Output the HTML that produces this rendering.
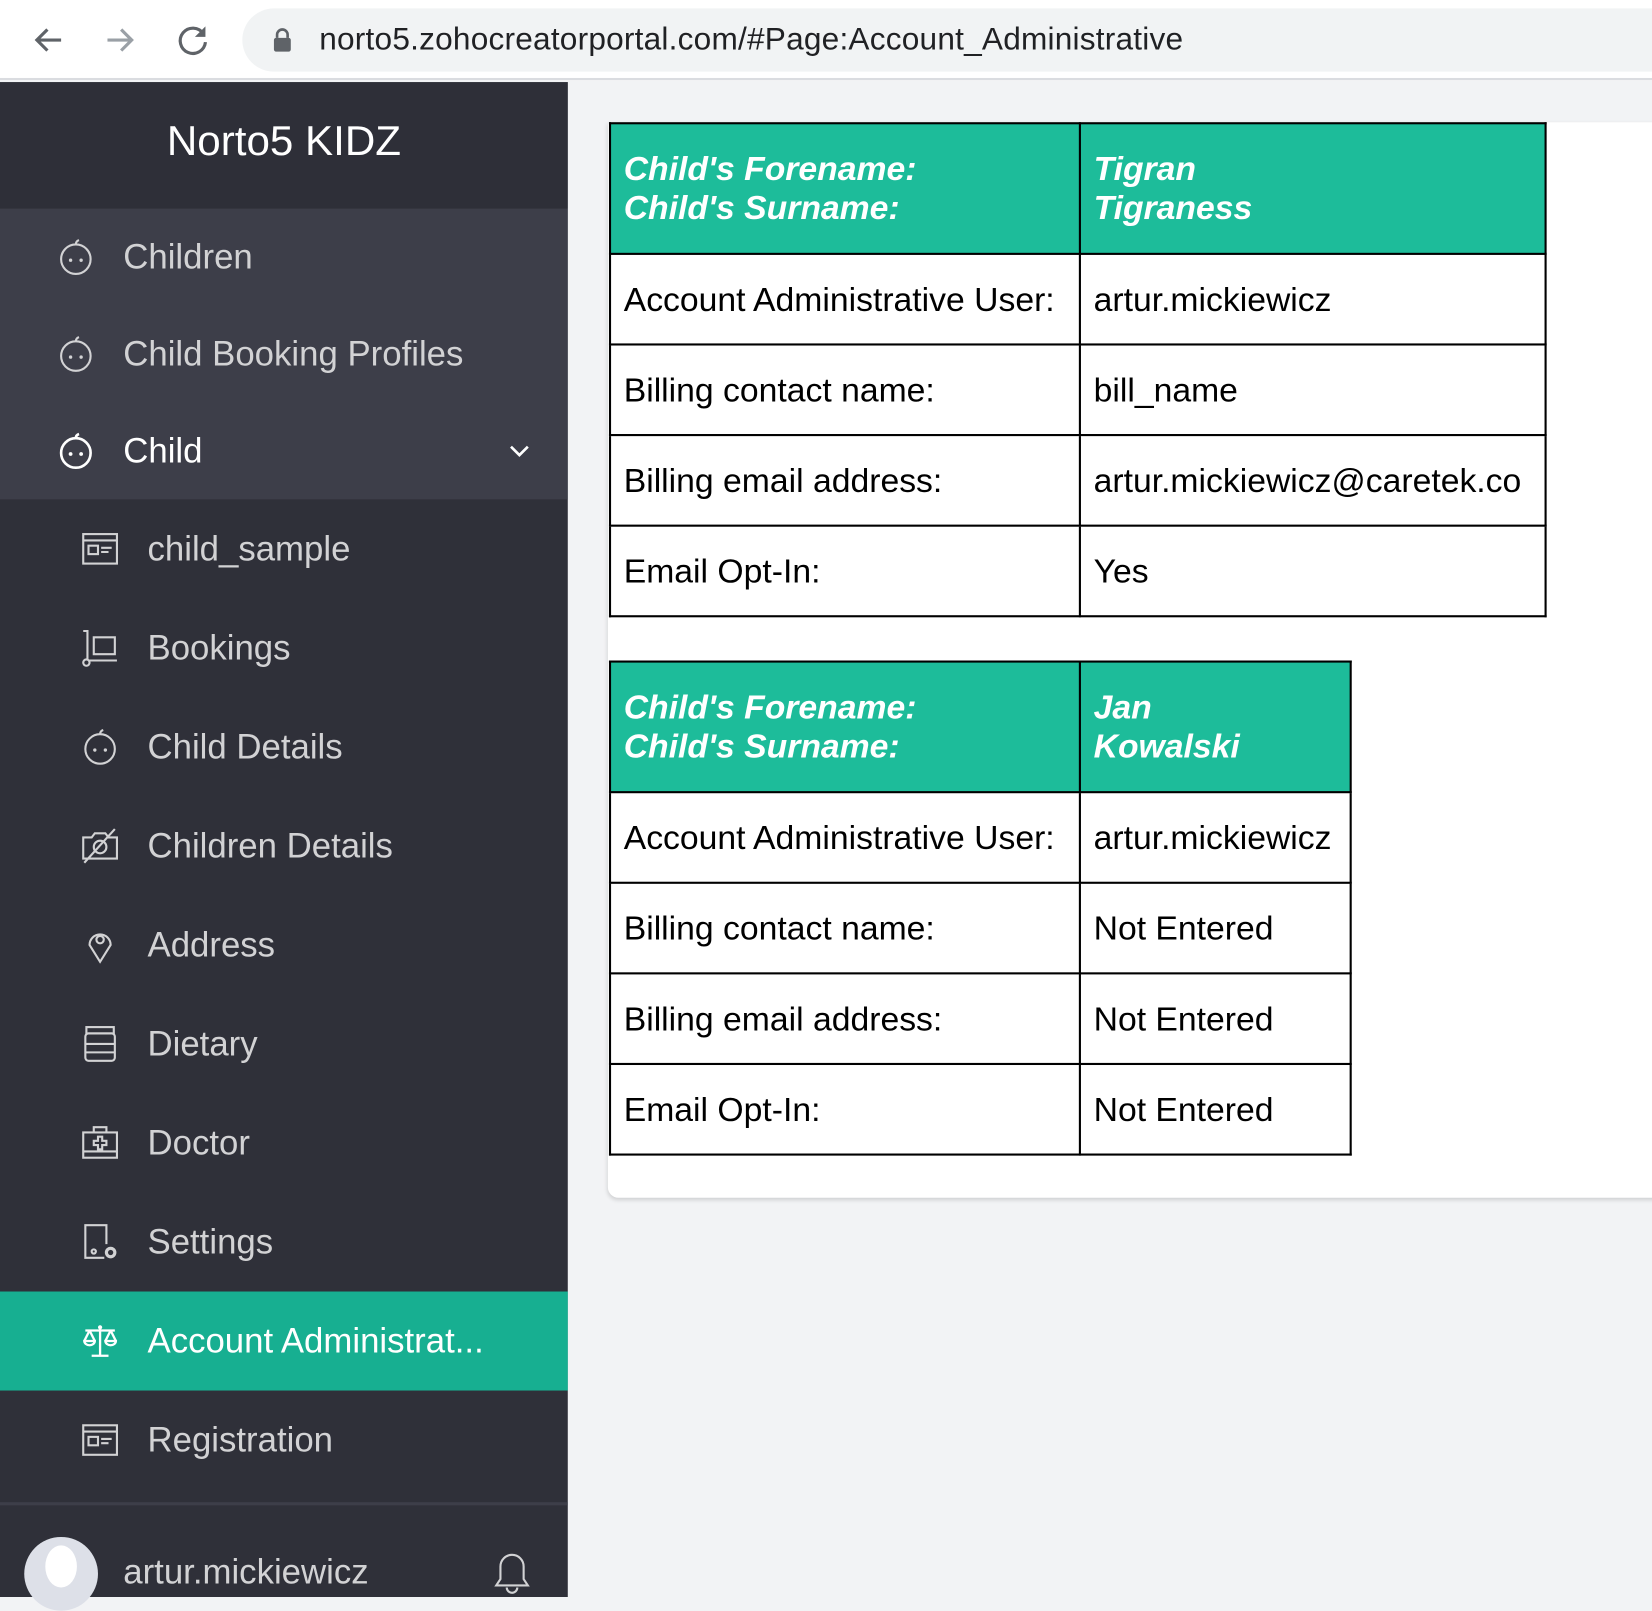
<!DOCTYPE html>
<html><head><meta charset="utf-8"><style>
*{margin:0;padding:0;box-sizing:border-box}
html,body{width:1652px;height:1597px;overflow:hidden;background:#f2f3f5}
#w{position:absolute;left:0;top:0;width:1568px;height:1516px;transform:scale(1.05357,1.05343);transform-origin:0 0;font-family:"Liberation Sans",sans-serif}
.top{position:absolute;left:0;top:0;width:1568px;height:76px;background:#fff;border-bottom:2px solid #dadce0}
.pill{position:absolute;left:230px;top:8px;width:1400px;height:60px;background:#f1f3f4;border-radius:30px}
.url{position:absolute;left:303px;top:21px;font-size:30px;color:#202124;letter-spacing:0.2px}
.side{position:absolute;left:0;top:78px;width:539px;height:1438px;background:#2f3039}
.hdr{height:120px;background:#2e2f38;color:#fff;font-size:40px;text-align:center;line-height:112px}
.grp{background:#3d3e49}
.it{position:relative;height:92px;color:#d2d2d4;font-size:33px;line-height:92px;padding-left:117px}
.sub{height:94px;line-height:94px;padding-left:140px}
.it svg{position:absolute;left:54px;top:28px;width:36px;height:36px}
.sub svg{left:77px;top:29px}
.act{background:#17af91;color:#fff}
.foot{position:absolute;left:0;top:1348px;width:539px;height:90px;border-top:3px solid #3d3e49}
.main{position:absolute;left:539px;top:78px;width:1029px;height:1438px;background:#f2f3f5}
.card{position:absolute;left:38px;top:38px;width:1000px;height:1021px;background:#fff;border-radius:0 0 0 10px;box-shadow:0 2px 4px rgba(0,0,0,.15)}
table{position:absolute;border-collapse:collapse;font-family:"Liberation Sans",Arial,sans-serif;font-size:32px}
td{border:2px solid #000;height:86px;padding:0 12px;color:#000;white-space:nowrap}
tr.h td{background:#1dbc9a;color:#fff;font-weight:bold;font-style:italic;height:124px;line-height:37px}
</style></head><body><div id="w">
<div class="top">
<svg style="position:absolute;left:30px;top:22px" width="32" height="32" viewBox="0 0 32 32"><path d="M28 16H6M15 6L5 16l10 10" fill="none" stroke="#5f6368" stroke-width="3"/></svg>
<svg style="position:absolute;left:98px;top:22px" width="32" height="32" viewBox="0 0 32 32"><path d="M4 16h22M17 6l10 10-10 10" fill="none" stroke="#9aa0a6" stroke-width="3"/></svg>
<svg style="position:absolute;left:166px;top:21px" width="34" height="34" viewBox="0 0 34 34"><path d="M27 11A12 12 0 1 0 29 19" fill="none" stroke="#5f6368" stroke-width="3"/><path d="M29 4v10H19z" fill="#5f6368"/></svg>
<div class="pill"></div>
<svg style="position:absolute;left:258px;top:26px" width="20" height="24" viewBox="0 0 20 24"><path d="M5 10V7a5 5 0 0 1 10 0v3" fill="none" stroke="#5f6368" stroke-width="2.5"/><rect x="2" y="10" width="16" height="13" rx="2" fill="#5f6368"/></svg>
<div class="url">norto5.zohocreatorportal.com/#Page:Account_Administrative</div>
</div>
<div class="side">
<div class="hdr">Norto5 KIDZ</div>
<div class="grp">
<div class="it"><svg viewBox="0 0 36 36"><circle cx="18" cy="20" r="14" fill="none" stroke="#d2d2d4" stroke-width="2"/><circle cx="13" cy="21" r="1.6" fill="#d2d2d4"/><circle cx="23" cy="21" r="1.6" fill="#d2d2d4"/><path d="M18 6q0-3 3-4" fill="none" stroke="#d2d2d4" stroke-width="2"/></svg>Children</div>
<div class="it"><svg viewBox="0 0 36 36"><circle cx="18" cy="20" r="14" fill="none" stroke="#d2d2d4" stroke-width="2"/><circle cx="13" cy="21" r="1.6" fill="#d2d2d4"/><circle cx="23" cy="21" r="1.6" fill="#d2d2d4"/><path d="M18 6q0-3 3-4" fill="none" stroke="#d2d2d4" stroke-width="2"/></svg>Child Booking Profiles</div>
<div class="it" style="color:#fff"><svg viewBox="0 0 36 36"><circle cx="18" cy="20" r="14" fill="none" stroke="#fff" stroke-width="2.5"/><circle cx="13" cy="21" r="1.8" fill="#fff"/><circle cx="23" cy="21" r="1.8" fill="#fff"/><path d="M18 6q0-3 3-4" fill="none" stroke="#fff" stroke-width="2.5"/></svg>Child<svg style="left:482px;top:38px;width:22px;height:16px" viewBox="0 0 22 16"><path d="M3 4l8 8 8-8" fill="none" stroke="#fff" stroke-width="2.5"/></svg></div>
</div>
<div class="it sub"><svg viewBox="0 0 36 36"><rect x="2" y="4" width="32" height="28" fill="none" stroke="#d2d2d4" stroke-width="2"/><path d="M2 10h32M8 7h0" stroke="#d2d2d4" stroke-width="2"/><rect x="7" y="15" width="9" height="8" fill="none" stroke="#d2d2d4" stroke-width="2"/><path d="M19 17h10M19 21h7" stroke="#d2d2d4" stroke-width="2"/></svg>child_sample</div>
<div class="it sub"><svg viewBox="0 0 36 36"><path d="M2 2h4v28M6 30h28M12 8h20v16H12z" fill="none" stroke="#d2d2d4" stroke-width="2"/><circle cx="5" cy="32" r="3" fill="#2f3039" stroke="#d2d2d4" stroke-width="2"/></svg>Bookings</div>
<div class="it sub"><svg viewBox="0 0 36 36"><circle cx="18" cy="20" r="14" fill="none" stroke="#d2d2d4" stroke-width="2"/><circle cx="13" cy="21" r="1.6" fill="#d2d2d4"/><circle cx="23" cy="21" r="1.6" fill="#d2d2d4"/><path d="M18 6q0-3 3-4" fill="none" stroke="#d2d2d4" stroke-width="2"/></svg>Child Details</div>
<div class="it sub"><svg viewBox="0 0 36 36"><path d="M2 10h8l3-4h10l3 4h8v20H2z" fill="none" stroke="#d2d2d4" stroke-width="2"/><circle cx="18" cy="19" r="6" fill="none" stroke="#d2d2d4" stroke-width="2"/><path d="M3 34L32 2" stroke="#d2d2d4" stroke-width="2"/></svg>Children Details</div>
<div class="it sub"><svg viewBox="0 0 36 36"><path d="M18 34L8 18a10 10 0 1 1 20 0z" fill="none" stroke="#d2d2d4" stroke-width="2"/><circle cx="18" cy="13" r="3.5" fill="none" stroke="#d2d2d4" stroke-width="2"/></svg>Address</div>
<div class="it sub"><svg viewBox="0 0 36 36"><rect x="5" y="2" width="26" height="6" fill="none" stroke="#d2d2d4" stroke-width="2"/><rect x="4" y="8" width="28" height="26" rx="3" fill="none" stroke="#d2d2d4" stroke-width="2"/><path d="M4 18h28M4 26h28" stroke="#d2d2d4" stroke-width="2"/></svg>Dietary</div>
<div class="it sub"><svg viewBox="0 0 36 36"><rect x="2" y="8" width="32" height="24" fill="none" stroke="#d2d2d4" stroke-width="2"/><path d="M12 8V3h12v5M2 26h32M16 12h4v4h4v4h-4v4h-4v-4h-4v-4h4z" fill="none" stroke="#d2d2d4" stroke-width="2"/></svg>Doctor</div>
<div class="it sub"><svg viewBox="0 0 36 36"><path d="M22 33H4V2h20v18" fill="none" stroke="#d2d2d4" stroke-width="2"/><circle cx="12" cy="27" r="2" fill="none" stroke="#d2d2d4" stroke-width="2"/><circle cx="28" cy="28" r="4" fill="none" stroke="#d2d2d4" stroke-width="3"/></svg>Settings</div>
<div class="it sub act"><svg viewBox="0 0 36 36"><path d="M18 4v28M10 32h16M4 8h28M8 8L3 18M8 8l5 10M28 8l-5 10M28 8l5 10M3 18a5 4 0 0 0 10 0zM23 18a5 4 0 0 0 10 0z" fill="none" stroke="#fff" stroke-width="2.2"/><circle cx="18" cy="5" r="2" fill="#fff"/></svg>Account Administrat...</div>
<div class="it sub"><svg viewBox="0 0 36 36"><rect x="2" y="4" width="32" height="28" fill="none" stroke="#d2d2d4" stroke-width="2"/><path d="M2 10h32" stroke="#d2d2d4" stroke-width="2"/><rect x="7" y="15" width="9" height="8" fill="none" stroke="#d2d2d4" stroke-width="2"/><path d="M19 17h10M19 21h7" stroke="#d2d2d4" stroke-width="2"/></svg>Registration</div>
<div class="foot">
<div style="position:absolute;left:23px;top:30px;width:70px;height:70px;border-radius:50%;background:#dde0e8;overflow:hidden"><div style="position:absolute;left:20px;top:8px;width:30px;height:40px;border-radius:50%;background:#fff"></div></div>
<div style="position:absolute;left:117px;top:44px;color:#d2d2d4;font-size:33px">artur.mickiewicz</div>
<svg style="position:absolute;left:468px;top:44px" width="36" height="42" viewBox="0 0 36 42"><path d="M18 3a11 11 0 0 0-11 11v12l-4 6h30l-4-6V14A11 11 0 0 0 18 3zM13 34a5 5 0 0 0 10 0" fill="none" stroke="#d2d2d4" stroke-width="2"/></svg>
</div>
</div>
<div class="main"><div class="card"></div></div>
<table style="left:578px;top:116px;width:890px">
<tr class="h"><td style="width:446px">Child's Forename:<br>Child's Surname:</td><td>Tigran<br>Tigraness</td></tr>
<tr><td>Account Administrative User:</td><td>artur.mickiewicz</td></tr>
<tr><td>Billing contact name:</td><td>bill_name</td></tr>
<tr><td>Billing email address:</td><td>artur.mickiewicz@caretek.co</td></tr>
<tr><td>Email Opt-In:</td><td>Yes</td></tr>
</table>
<table style="left:578px;top:627px;width:705px">
<tr class="h"><td style="width:446px">Child's Forename:<br>Child's Surname:</td><td>Jan<br>Kowalski</td></tr>
<tr><td>Account Administrative User:</td><td>artur.mickiewicz</td></tr>
<tr><td>Billing contact name:</td><td>Not Entered</td></tr>
<tr><td>Billing email address:</td><td>Not Entered</td></tr>
<tr><td>Email Opt-In:</td><td>Not Entered</td></tr>
</table>
</div></body></html>
